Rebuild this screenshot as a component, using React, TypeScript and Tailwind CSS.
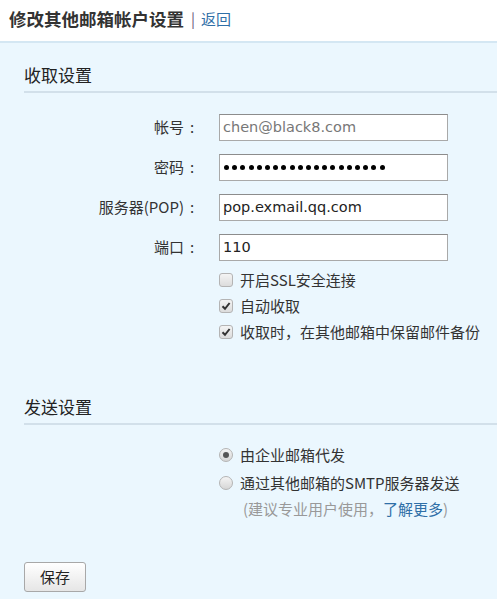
const font = "font-['Noto_Sans_CJK_SC','Noto_Sans',sans-serif]";

const fields = [
  { label: "帐号", value: "chen@black8.com", muted: true },
  { label: "密码", value: "", password: true },
  { label: "服务器(POP)", value: "pop.exmail.qq.com" },
  { label: "端口", value: "110" },
];

const options = [
  { label: "开启SSL安全连接", checked: false },
  { label: "自动收取", checked: true },
  { label: "收取时，在其他邮箱中保留邮件备份", checked: true },
];

function Checkbox({ checked }: { checked: boolean }) {
  return (
    <span className="grid h-[14px] w-[14px] place-items-center rounded-[3px] border border-[#b4b4b4] bg-gradient-to-b from-[#f4f4f4] to-[#dcdcdc]">
      {checked && (
        <svg width="10" height="10" viewBox="0 0 10 10">
          <path d="M1.5 5.2 L4 7.8 L8.6 2" fill="none" stroke="#333" strokeWidth="2" />
        </svg>
      )}
    </span>
  );
}

function Radio({ checked }: { checked: boolean }) {
  return (
    <span className="grid h-[14px] w-[14px] place-items-center rounded-full border border-[#b4b4b4] bg-gradient-to-b from-[#f4f4f4] to-[#d6d6d6]">
      {checked && <span className="h-[6px] w-[6px] rounded-full bg-[#555]" />}
    </span>
  );
}

function SectionTitle({ children }: { children: string }) {
  return (
    <div className="ml-[24px] border-b-2 border-[#d2e0ea] pb-[4px] text-[17px] leading-[24px] text-[#222]">
      {children}
    </div>
  );
}

export default function App() {
  return (
    <div className={`min-h-[599px] w-[497px] bg-[#ebf7fe] ${font}`}>
      <header className="flex h-[43px] items-center border-b-2 border-[#d4e7f3] bg-white pb-[2px] pl-[9px]">
        <span className="text-[17.5px] font-bold text-[#333]">修改其他邮箱帐户设置</span>
        <span className="ml-[7px] text-[15px] text-[#6a5a7a]">|</span>
        <a href="#" className="ml-[6px] text-[15px] text-[#2f6fa7]">
          返回
        </a>
      </header>

      <div className="mt-[20px]">
        <SectionTitle>收取设置</SectionTitle>

        <div className="mt-[21px] flex flex-col gap-[13px]">
          {fields.map((f) => (
            <div key={f.label} className="flex h-[27px] items-center text-[15px] text-[#333]">
              <label className="w-[184px] text-right">{f.label}</label>
              <span className="w-[35px] pl-[6px]">:</span>
              <div
                className={`flex h-[27px] w-[229px] items-center border border-[#a9a9a9] border-t-[#8c8c8c] bg-white pl-[3px] text-[14.5px] font-['DejaVu_Sans',sans-serif] ${
                  f.muted ? "text-[#777]" : "text-[#222]"
                }`}
              >
                {f.password ? (
                  <span className="flex gap-[3.2px] pl-[1px]">
                    {Array.from({ length: 20 }).map((_, i) => (
                      <span key={i} className="h-[5px] w-[5px] rounded-full bg-black" />
                    ))}
                  </span>
                ) : (
                  f.value
                )}
              </div>
            </div>
          ))}
        </div>

        <div className="mt-[6px] pl-[219px]">
          {options.map((o) => (
            <div key={o.label} className="flex h-[26px] items-center gap-[7px] text-[15px] text-[#333]">
              <Checkbox checked={o.checked} />
              <span>{o.label}</span>
            </div>
          ))}
        </div>
      </div>

      <div className="mt-[50px]">
        <SectionTitle>发送设置</SectionTitle>

        <div className="mt-[16px] pl-[219px] text-[15px] text-[#333]">
          <div className="flex h-[28px] items-center gap-[7px]">
            <Radio checked />
            <span>由企业邮箱代发</span>
          </div>
          <div className="flex h-[28px] items-center gap-[7px]">
            <Radio checked={false} />
            <span>通过其他邮箱的SMTP服务器发送</span>
          </div>
          <div className="flex h-[24px] items-center pl-[24px] text-[#999]">
            (建议专业用户使用，
            <a href="#" className="text-[#2f6fa7]">
              了解更多
            </a>
            )
          </div>
        </div>
      </div>

      <div className="mt-[41px] pl-[24px] pb-[8px]">
        <button className="h-[30px] w-[62px] rounded-[3px] border border-[#a8a8a8] bg-gradient-to-b from-white to-[#e6e6e6] text-[15px] text-[#222]">
          保存
        </button>
      </div>
    </div>
  );
}
